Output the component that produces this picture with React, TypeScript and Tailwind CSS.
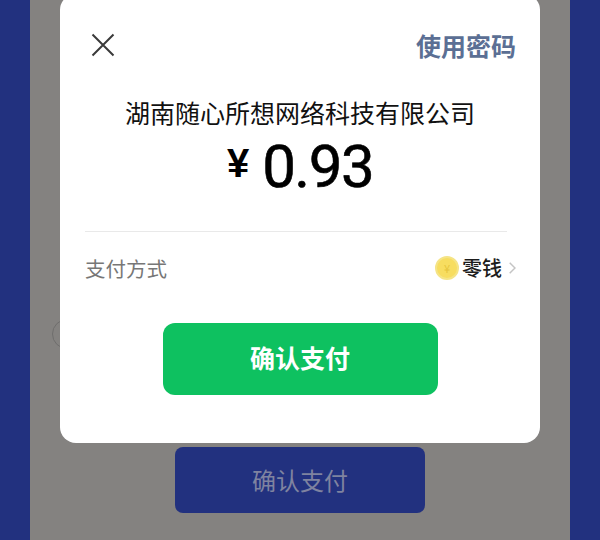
import React from "react";

const cjk = "font-['Noto_Sans_CJK_SC','Noto_Sans',sans-serif]";

export default function App() {
  return (
    <div className={`w-[600px] h-[540px] overflow-hidden bg-[#22317f] flex justify-center ${cjk}`}>
      <div className="relative w-[540px] h-[540px] bg-[#848280] flex flex-col items-center">
        <div className="absolute left-[22px] top-[319px] w-[30px] h-[30px] rounded-full border border-[#6f6e6d]" />
        <div className="relative w-[480px] h-[449px] -mt-[6px] shrink-0 bg-white rounded-[16px] flex flex-col">
          <div className="flex items-center justify-between h-[34px] mt-[34px] pl-[31px] pr-[24px]">
            <svg width="24" height="24" viewBox="0 0 24 24" fill="none" stroke="#3a3a3a" strokeWidth="2">
              <path d="M1.5 1.5 L22.5 22.5 M22.5 1.5 L1.5 22.5" />
            </svg>
            <span className="text-[25px] leading-[34px] font-bold text-[#5b6f94]">使用密码</span>
          </div>
          <div className="mt-[32px] text-center text-[25px] leading-[36px] text-[#111111] font-normal">湖南随心所想网络科技有限公司</div>
          <div className="mt-[6px] h-[62px] flex items-center justify-center text-black">
            <span className="text-[40px] font-bold leading-none font-['Liberation_Sans',sans-serif] mr-[13px] -mt-[8px]">¥</span>
            <span className="text-[60px] leading-none font-normal tracking-[-1.5px] font-['Roboto',sans-serif] [-webkit-text-stroke:0.6px_black]">0.93</span>
          </div>
          <div className="mt-[33px] ml-[25px] mr-[33px] h-px bg-[#e9e9e9]" />
          <div className="mt-[19px] h-[34px] pl-[25px] pr-[24px] flex items-center justify-between">
            <span className="text-[20.5px] text-[#777777]">支付方式</span>
            <div className="flex items-center">
              <div className="w-[24px] h-[24px] rounded-full bg-[#f7dd60] border-2 border-[#f5e486] flex items-center justify-center text-[11px] leading-none text-[#e5c43c]">¥</div>
              <span className="ml-[3px] text-[20px] text-[#1c1c1c] font-medium">零钱</span>
              <svg className="ml-[7px]" width="7" height="12" viewBox="0 0 7 12" fill="none" stroke="#c4c4c4" strokeWidth="1.5">
                <path d="M0.7 0.7 L6 6 L0.7 11.3" />
              </svg>
            </div>
          </div>
          <button className="mt-[38px] self-center w-[275px] h-[72px] pb-[3px] rounded-[12px] bg-[#0ec160] text-white text-[25px] font-bold">确认支付</button>
        </div>
        <button className="mt-[4px] w-[250px] h-[66px] rounded-[8px] bg-[#22317f] text-[#7f83a0] text-[24px]">确认支付</button>
      </div>
    </div>
  );
}
